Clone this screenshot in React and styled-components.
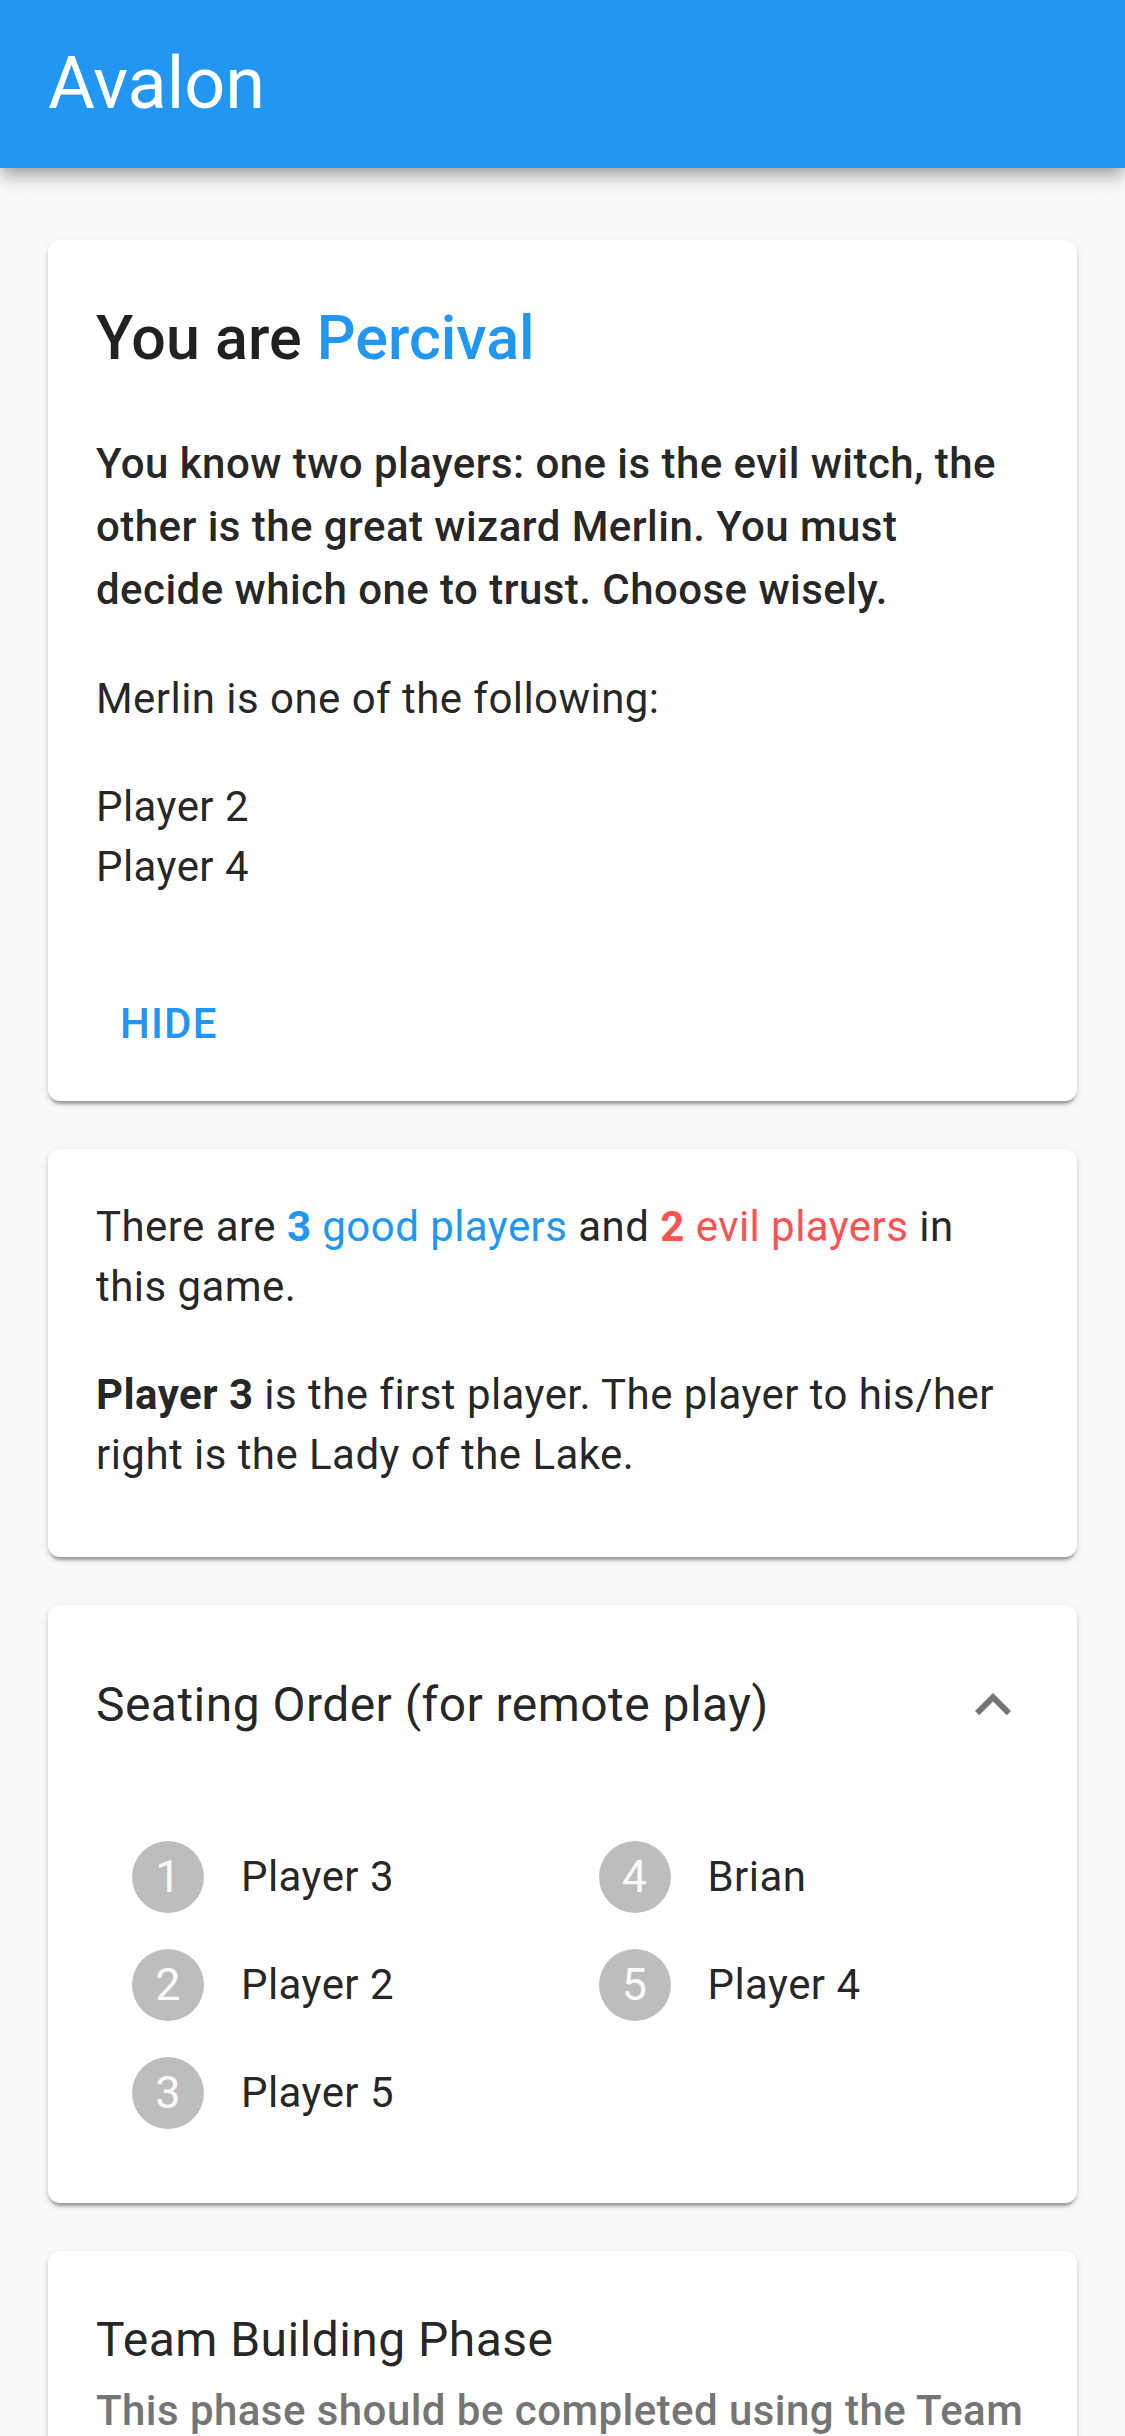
import React from "react";
import styled, { createGlobalStyle } from "styled-components";

const GlobalStyle = createGlobalStyle`
  body {
    margin: 0;
    background: #fafafa;
    font-family: Roboto, "Liberation Sans", sans-serif;
    color: rgba(0, 0, 0, 0.87);
  }
`;

const AppBar = styled.header`
  position: relative;
  z-index: 1;
  display: flex;
  align-items: center;
  height: 168px;
  padding: 0 48px;
  background: #2196f3;
  box-shadow: 0 6px 12px -3px rgba(0, 0, 0, 0.2), 0 12px 15px 0 rgba(0, 0, 0, 0.14),
    0 3px 30px 0 rgba(0, 0, 0, 0.12);
`;

const AppTitle = styled.h1`
  margin: 0;
  font-size: 72px;
  font-weight: 400;
  line-height: 96px;
  color: #fff;
`;

const Main = styled.main`
  display: flex;
  flex-direction: column;
  gap: 48px;
  padding: 72px 48px 0;
`;

const Card = styled.section`
  background: #fff;
  border-radius: 12px;
  box-shadow: 0 6px 3px -3px rgba(0, 0, 0, 0.2), 0 3px 3px 0 rgba(0, 0, 0, 0.14),
    0 3px 9px 0 rgba(0, 0, 0, 0.12);
  overflow: hidden;
`;

const CardContent = styled.div`
  padding: ${(p) => (p.$top ? p.$top : 48)}px 48px ${(p) => (p.$bottom ? p.$bottom : 48)}px;
`;

const RoleTitle = styled.h2`
  margin: 0 0 44px;
  font-size: 61px;
  font-weight: 500;
  line-height: 100px;
`;

const Highlight = styled.span`
  color: ${(p) => (p.$evil ? "#ff5252" : "#2196f3")};
  font-weight: ${(p) => (p.$bold ? 700 : "inherit")};
`;

const Para = styled.p`
  margin: 0 0 48px;
  font-size: 42px;
  line-height: ${(p) => (p.$strong ? 63 : 60)}px;
  font-weight: ${(p) => (p.$strong ? 500 : 400)};
  letter-spacing: 0.01071em;

  &:last-child {
    margin-bottom: 0;
  }
`;

const Strong = styled.b`
  font-weight: 700;
`;

const CardActions = styled.div`
  display: flex;
  padding: 24px 48px;
`;

const TextButton = styled.button`
  height: 108px;
  padding: 0 24px;
  border: none;
  border-radius: 12px;
  background: none;
  color: #2196f3;
  font-family: Roboto, "Liberation Sans", sans-serif;
  font-size: 42px;
  font-weight: 500;
  letter-spacing: 0.02857em;
  text-transform: uppercase;
  cursor: pointer;
`;

const Summary = styled.div`
  display: flex;
  align-items: center;
  justify-content: space-between;
  padding: 64px 48px 55px;
`;

const SummaryHeading = styled.h3`
  margin: 0;
  font-size: 48px;
  font-weight: 400;
  line-height: 72px;
  letter-spacing: 0.00938em;
`;

const Details = styled.div`
  display: grid;
  grid-template-columns: 1fr 1fr;
  grid-template-rows: repeat(3, 108px);
  grid-auto-flow: column;
  padding: 27px 48px 56px;
`;

const Seat = styled.div`
  display: flex;
  align-items: center;
  gap: 37px;
  padding-left: 36px;
  font-size: 42px;
  line-height: 60px;
  letter-spacing: 0.01071em;
`;

const SeatNumber = styled.span`
  display: flex;
  align-items: center;
  justify-content: center;
  width: 72px;
  height: 72px;
  border-radius: 50%;
  background: #bdbdbd;
  color: #fafafa;
  font-size: 45px;
  letter-spacing: 0;
`;

const PhaseTitle = styled.h3`
  margin: 0;
  font-size: 48px;
  font-weight: 400;
  line-height: 77px;
  letter-spacing: 0.00938em;
`;

const PhaseNote = styled.p`
  margin: 0;
  font-size: 42px;
  font-weight: 500;
  line-height: 66px;
  letter-spacing: 0.01071em;
  color: #757575;
`;

const ExpandLess = () => (
  <svg width="72" height="72" viewBox="0 0 24 24" aria-hidden="true">
    <path fill="#757575" d="M12 8l-6 6 1.41 1.41L12 10.83l4.59 4.58L18 14z" />
  </svg>
);

const seats = ["Player 3", "Player 2", "Player 5", "Brian", "Player 4"];

export default function App() {
  return (
    <>
      <GlobalStyle />
      <AppBar>
        <AppTitle>Avalon</AppTitle>
      </AppBar>
      <Main>
        <Card>
          <CardContent>
            <RoleTitle>
              You are <Highlight>Percival</Highlight>
            </RoleTitle>
            <Para $strong>
              You know two players: one is the evil witch, the other is the great wizard
              Merlin. You must decide which one to trust. Choose wisely.
            </Para>
            <Para>Merlin is one of the following:</Para>
            <Para>
              Player 2
              <br />
              Player 4
            </Para>
          </CardContent>
          <CardActions>
            <TextButton>Hide</TextButton>
          </CardActions>
        </Card>

        <Card>
          <CardContent $bottom={72}>
            <Para>
              There are <Highlight $bold>3</Highlight> <Highlight>good players</Highlight> and{" "}
              <Highlight $evil $bold>
                2
              </Highlight>{" "}
              <Highlight $evil>evil players</Highlight> in this game.
            </Para>
            <Para>
              <Strong>Player 3</Strong> is the first player. The player to his/her right is
              the Lady of the Lake.
            </Para>
          </CardContent>
        </Card>

        <Card>
          <Summary>
            <SummaryHeading>Seating Order (for remote play)</SummaryHeading>
            <ExpandLess />
          </Summary>
          <Details>
            {seats.map((name, i) => (
              <Seat key={i}>
                <SeatNumber>{i + 1}</SeatNumber>
                {name}
              </Seat>
            ))}
          </Details>
        </Card>

        <Card>
          <CardContent $top={50}>
            <PhaseTitle>Team Building Phase</PhaseTitle>
            <PhaseNote>
              This phase should be completed using the Team Building cards that came with
              the game.
            </PhaseNote>
          </CardContent>
        </Card>
      </Main>
    </>
  );
}
